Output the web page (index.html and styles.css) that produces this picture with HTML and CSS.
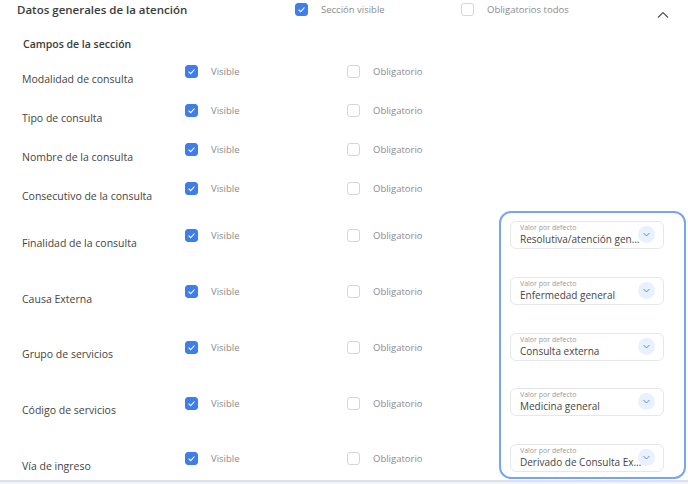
FILE: index.html
```html
<!DOCTYPE html>
<html lang="es">
<head>
  <meta charset="UTF-8">
  <title>Datos generales de la atención</title>
  <link rel="stylesheet" href="styles.css">
</head>
<body>
  <div class="panel">
    <div class="panel-header">
      <h2 class="panel-title">Datos generales de la atención</h2>
      <label class="check-item head-visible"><span class="box checked"></span>Sección visible</label>
      <label class="check-item head-required"><span class="box"></span>Obligatorios todos</label>
      <svg class="collapse" width="12" height="8" viewBox="0 0 12 8"><path d="M1 6.5 L6 1.5 L11 6.5" fill="none" stroke="#555" stroke-width="1.2"/></svg>
    </div>

    <div class="subtitle">Campos de la sección</div>

    <div class="rows short">
      <div class="row">
        <span class="field">Modalidad de consulta</span>
        <label class="check-item col-visible"><span class="box checked"></span>Visible</label>
        <label class="check-item"><span class="box"></span>Obligatorio</label>
      </div>
      <div class="row">
        <span class="field">Tipo de consulta</span>
        <label class="check-item col-visible"><span class="box checked"></span>Visible</label>
        <label class="check-item"><span class="box"></span>Obligatorio</label>
      </div>
      <div class="row">
        <span class="field">Nombre de la consulta</span>
        <label class="check-item col-visible"><span class="box checked"></span>Visible</label>
        <label class="check-item"><span class="box"></span>Obligatorio</label>
      </div>
      <div class="row">
        <span class="field">Consecutivo de la consulta</span>
        <label class="check-item col-visible"><span class="box checked"></span>Visible</label>
        <label class="check-item"><span class="box"></span>Obligatorio</label>
      </div>
    </div>

    <div class="with-defaults">
      <div class="rows tall">
        <div class="row">
          <span class="field">Finalidad de la consulta</span>
          <label class="check-item col-visible"><span class="box checked"></span>Visible</label>
          <label class="check-item"><span class="box"></span>Obligatorio</label>
        </div>
        <div class="row">
          <span class="field">Causa Externa</span>
          <label class="check-item col-visible"><span class="box checked"></span>Visible</label>
          <label class="check-item"><span class="box"></span>Obligatorio</label>
        </div>
        <div class="row">
          <span class="field">Grupo de servicios</span>
          <label class="check-item col-visible"><span class="box checked"></span>Visible</label>
          <label class="check-item"><span class="box"></span>Obligatorio</label>
        </div>
        <div class="row">
          <span class="field">Código de servicios</span>
          <label class="check-item col-visible"><span class="box checked"></span>Visible</label>
          <label class="check-item"><span class="box"></span>Obligatorio</label>
        </div>
        <div class="row">
          <span class="field">Vía de ingreso</span>
          <label class="check-item col-visible"><span class="box checked"></span>Visible</label>
          <label class="check-item"><span class="box"></span>Obligatorio</label>
        </div>
      </div>

      <div class="defaults">
        <div class="select">
          <span class="select-label">Valor por defecto</span>
          <span class="select-value">Resolutiva/atención gen…</span>
          <span class="select-arrow"></span>
        </div>
        <div class="select">
          <span class="select-label">Valor por defecto</span>
          <span class="select-value">Enfermedad general</span>
          <span class="select-arrow"></span>
        </div>
        <div class="select">
          <span class="select-label">Valor por defecto</span>
          <span class="select-value">Consulta externa</span>
          <span class="select-arrow"></span>
        </div>
        <div class="select">
          <span class="select-label">Valor por defecto</span>
          <span class="select-value">Medicina general</span>
          <span class="select-arrow"></span>
        </div>
        <div class="select">
          <span class="select-label">Valor por defecto</span>
          <span class="select-value">Derivado de Consulta Ex…</span>
          <span class="select-arrow"></span>
        </div>
      </div>
    </div>
  </div>
</body>
</html>
```

FILE: styles.css
```css
body {
  margin: 0;
  font-family: 'Open Sans', 'Noto Sans', sans-serif;
  background: #f1f3f6;
  overflow: hidden;
}

.panel {
  background: white;
  height: 480px;
  overflow: hidden;
  border-bottom: 2px solid #dde2ea;
}

.panel-header {
  display: flex;
  align-items: center;
  height: 19px;
  padding: 0 0 0 17px;
}

.panel-title {
  margin: 0;
  width: 278px;
  font-size: 11.5px;
  font-weight: 600;
  color: #3b3b3b;
}

.check-item {
  display: flex;
  align-items: center;
  gap: 13px;
  font-size: 9.5px;
  color: #8b8b8b;
}

.head-visible {
  width: 166px;
}

.head-required {
  width: 196px;
}

.collapse {
  margin-top: 10px;
}

.box {
  box-sizing: border-box;
  width: 13px;
  height: 13px;
  border: 1px solid #d3d6db;
  border-radius: 3px;
  background: white;
  flex-shrink: 0;
}

.box.checked {
  border-color: #3f7ee8;
  background: #3f7ee8 url("data:image/svg+xml;utf8,<svg xmlns='http://www.w3.org/2000/svg' viewBox='0 0 13 13'><path d='M3.6 6.6 L5.7 8.6 L9.5 4.5' fill='none' stroke='white' stroke-width='1.1'/></svg>") center/13px no-repeat;
}

.subtitle {
  margin: 18px 0 0 23px;
  height: 15px;
  font-size: 10.5px;
  font-weight: 600;
  color: #3b3b3b;
}

.rows {
  padding-left: 22px;
}

.row {
  display: flex;
  align-items: center;
  height: 39px;
}

.rows.tall .row {
  height: 55.75px;
}

.field {
  width: 163px;
  padding-top: 14px;
  font-size: 10.5px;
  color: #444;
}

.col-visible {
  width: 162px;
}

.with-defaults {
  display: flex;
}

.with-defaults .rows {
  width: 477px;
}

.defaults {
  box-sizing: border-box;
  width: 187px;
  height: 268px;
  margin-top: 3px;
  padding: 8px 20px 0 9px;
  border: 2px solid #78a5f1;
  border-radius: 12px;
  display: flex;
  flex-direction: column;
  gap: 27.75px;
}

.select {
  position: relative;
  box-sizing: border-box;
  height: 28px;
  padding: 1px 24px 0 9px;
  border: 1px solid #e4e7eb;
  border-radius: 6px;
  display: flex;
  flex-direction: column;
}

.select-label {
  font-size: 7px;
  line-height: 9px;
  color: #9a9a9a;
}

.select-value {
  font-size: 10px;
  line-height: 14px;
  color: #454545;
  white-space: nowrap;
}

.select-arrow {
  position: absolute;
  right: 8px;
  top: 4px;
  width: 17px;
  height: 17px;
  border-radius: 50%;
  background: #e8f1fd url("data:image/svg+xml;utf8,<svg xmlns='http://www.w3.org/2000/svg' viewBox='0 0 17 17'><path d='M5.5 7 L8.5 10 L11.5 7' fill='none' stroke='%235b8fdc' stroke-width='1'/></svg>") center/17px no-repeat;
}
```
